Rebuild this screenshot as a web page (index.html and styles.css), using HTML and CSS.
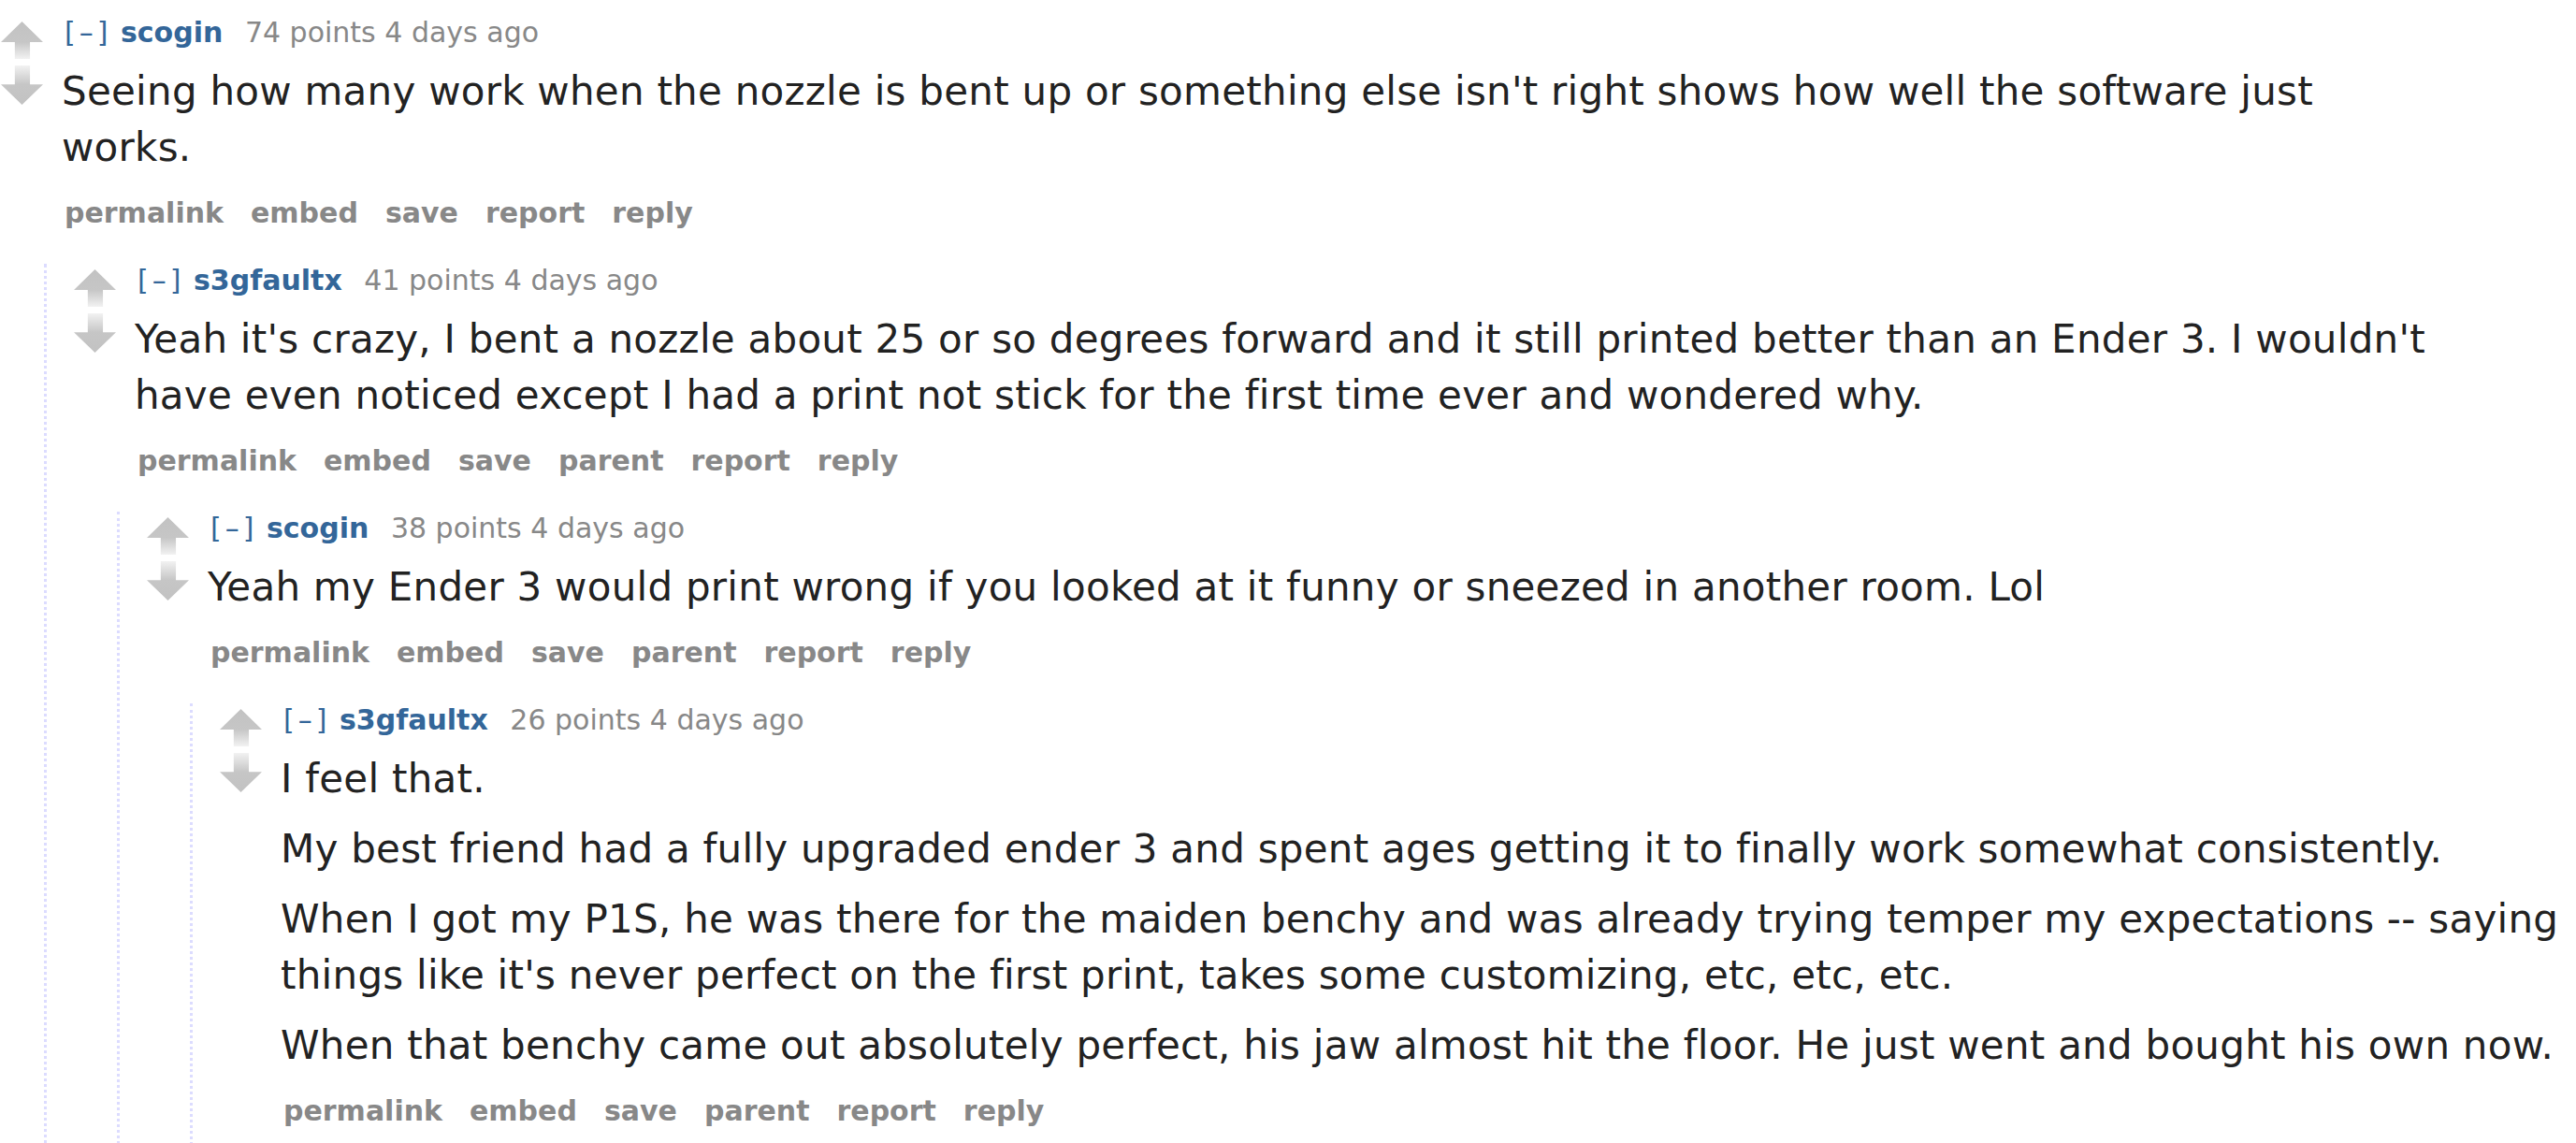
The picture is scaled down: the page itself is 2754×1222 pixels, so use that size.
FILE: index.html
```html
<!DOCTYPE html>
<html>
<head>
	<title>comments</title>
	<meta charset="utf-8">
	<link rel="stylesheet" href="styles.css">
</head>
<body>

<div class="commentarea">

	<div class="comment">
		<div class="thing">
			<div class="midcol">
				<div class="arrow up"></div>
				<div class="arrow down"></div>
			</div>
			<div class="entry">
				<p class="tagline"><a class="expand">[–]</a> <a class="author">scogin</a> <span class="score">74 points</span> <time>4 days ago</time></p>
				<div class="md">
					<p>Seeing how many work when the nozzle is bent up or something else isn't right shows how well the software just works.</p>
				</div>
				<ul class="buttons">
					<li>permalink</li>
					<li>embed</li>
					<li>save</li>
					<li>report</li>
					<li>reply</li>
				</ul>
			</div>
		</div>

		<div class="child">
			<div class="comment">
				<div class="thing">
					<div class="midcol">
						<div class="arrow up"></div>
						<div class="arrow down"></div>
					</div>
					<div class="entry">
						<p class="tagline"><a class="expand">[–]</a> <a class="author">s3gfaultx</a> <span class="score">41 points</span> <time>4 days ago</time></p>
						<div class="md">
							<p>Yeah it's crazy, I bent a nozzle about 25 or so degrees forward and it still printed better than an Ender 3. I wouldn't have even noticed except I had a print not stick for the first time ever and wondered why.</p>
						</div>
						<ul class="buttons">
							<li>permalink</li>
							<li>embed</li>
							<li>save</li>
							<li>parent</li>
							<li>report</li>
							<li>reply</li>
						</ul>
					</div>
				</div>

				<div class="child">
					<div class="comment">
						<div class="thing">
							<div class="midcol">
								<div class="arrow up"></div>
								<div class="arrow down"></div>
							</div>
							<div class="entry">
								<p class="tagline"><a class="expand">[–]</a> <a class="author">scogin</a> <span class="score">38 points</span> <time>4 days ago</time></p>
								<div class="md">
									<p>Yeah my Ender 3 would print wrong if you looked at it funny or sneezed in another room. Lol</p>
								</div>
								<ul class="buttons">
									<li>permalink</li>
									<li>embed</li>
									<li>save</li>
									<li>parent</li>
									<li>report</li>
									<li>reply</li>
								</ul>
							</div>
						</div>

						<div class="child">
							<div class="comment">
								<div class="thing">
									<div class="midcol">
										<div class="arrow up"></div>
										<div class="arrow down"></div>
									</div>
									<div class="entry">
										<p class="tagline"><a class="expand">[–]</a> <a class="author">s3gfaultx</a> <span class="score">26 points</span> <time>4 days ago</time></p>
										<div class="md">
											<p>I feel that.</p>
											<p>My best friend had a fully upgraded ender 3 and spent ages getting it to finally work somewhat consistently.</p>
											<p>When I got my P1S, he was there for the maiden benchy and was already trying temper my expectations -- saying things like it's never perfect on the first print, takes some customizing, etc, etc, etc.</p>
											<p>When that benchy came out absolutely perfect, his jaw almost hit the floor. He just went and bought his own now.</p>
										</div>
										<ul class="buttons">
											<li>permalink</li>
											<li>embed</li>
											<li>save</li>
											<li>parent</li>
											<li>report</li>
											<li>reply</li>
										</ul>
									</div>
								</div>
							</div>
						</div>
					</div>
				</div>
			</div>
		</div>
	</div>

</div>

</body>
</html>
```

FILE: styles.css
```css
html, body {
	overflow: hidden;
}
body {
	margin: 0;
	background: #fff;
	font-family: "DejaVu Sans", Verdana, sans-serif;
}
.commentarea {
	padding: 17px 0 0 1px;
}

.thing {
	display: flex;
	align-items: flex-start;
}
.midcol {
	width: 45px;
	margin-right: 20px;
	padding-top: 6px;
	flex-shrink: 0;
}
.arrow {
	width: 45px;
}
.arrow.up {
	height: 40px;
	background: linear-gradient(to bottom, #c2c2c2 0%, #c6c6c6 55%, #f2f2f2 100%);
	clip-path: polygon(50% 0, 100% 55%, 69% 55%, 69% 100%, 33% 100%, 33% 55%, 0 55%);
}
.arrow.down {
	height: 42px;
	margin-top: 7px;
	background: linear-gradient(to bottom, #f2f2f2 0%, #c6c6c6 48%, #c2c2c2 100%);
	clip-path: polygon(33% 0, 69% 0, 69% 48%, 100% 48%, 50% 100%, 0 48%, 33% 48%);
}

.entry {
	flex: 1;
	min-width: 0;
}
.tagline {
	margin: 0 0 0 3px;
	font-size: 30px;
	line-height: 36px;
	color: #888;
	white-space: nowrap;
}
.tagline .expand {
	color: #369;
	letter-spacing: 4px;
}
.tagline .author {
	color: #369;
	font-weight: bold;
	margin-right: 14px;
}

.md {
	margin-top: 15px;
	max-width: 60em;
	font-size: 42px;
	line-height: 60px;
	letter-spacing: 0.25px;
	color: #222;
}
.md p {
	margin: 0 0 15px;
}

.buttons {
	list-style: none;
	margin: 0 0 0 3px;
	padding: 7px 0 0;
	display: flex;
	gap: 29px;
	font-size: 30px;
	line-height: 36px;
	font-weight: bold;
	color: #888;
}

.child {
	margin: 36px 0 0 46px;
	padding: 0 0 60px 29px;
	border-left: 3px dotted #dcdcff;
}
```
